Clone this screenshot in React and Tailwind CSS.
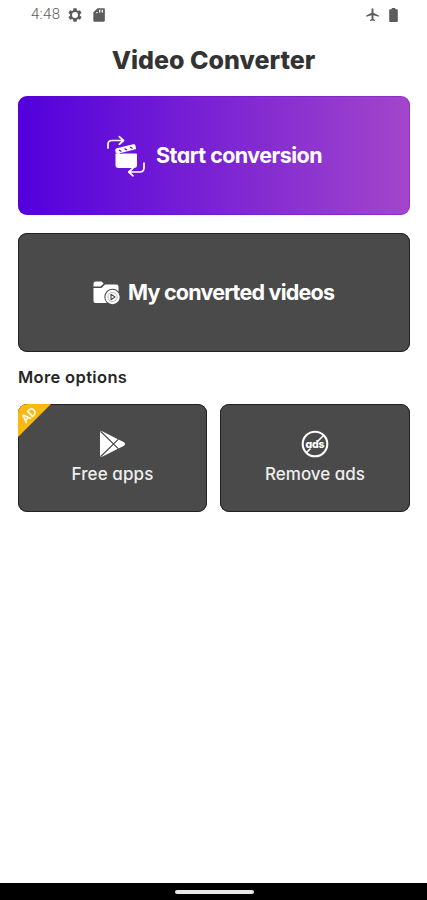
import React from "react";

const label = "font-['Inter',sans-serif] [font-feature-settings:'cv11'] whitespace-nowrap leading-none";
const darkCard = "rounded-[9px] bg-[#4a4a4a] shadow-[inset_0_0_0_1px_#222] text-white";

function StatusBar() {
  return (
    <div className="flex h-[29px] items-center pl-[31px] pr-[29px] text-[#5c5c5c]">
      <span className="w-[31px] font-['Roboto',sans-serif] text-[15px] font-light leading-none tracking-[0.3px]">4:48</span>
      <svg className="ml-[5px] size-[16px]" viewBox="0 0 24 24" fill="currentColor">
        <path fillRule="evenodd" d="M19.4 13a7.500 7.500 0 0 0 0-2l2.100-1.650a.5.5 0 0 0 .12-.64l-2-3.460a.5.5 0 0 0-.61-.22l-2.490 1a7.300 7.300 0 0 0-1.690-.98l-.38-2.650A.5.5 0 0 0 14 2h-4a.5.5 0 0 0-.49.420l-.38 2.650c-.61.250-1.170.590-1.690.980l-2.490-1a.5.5 0 0 0-.61.220l-2 3.460a.5.5 0 0 0 .12.640L4.600 11a8 8 0 0 0 0 2l-2.110 1.650a.5.5 0 0 0-.12.640l2 3.460c.12.220.390.300.610.220l2.490-1c.52.400 1.080.730 1.690.980l.38 2.650c.03.240.240.420.490.420h4c.25 0 .46-.18.490-.42l.38-2.650a7.300 7.300 0 0 0 1.690-.98l2.490 1c.23.090.490 0 .61-.22l2-3.460a.5.5 0 0 0-.12-.64zM12 16.500a4.500 4.500 0 1 1 0-9 4.500 4.500 0 0 1 0 9z" />
      </svg>
      <svg className="ml-[8px] size-[16px]" viewBox="0 0 24 24" fill="currentColor">
        <path fillRule="evenodd" d="M19 2h-9L3.500 8v12.500c0 1 .8 1.500 1.700 1.500H19c1 0 1.800-.7 1.800-1.700V3.800C20.800 2.800 20 2 19 2zM8 7.500h2v2H8zm4-3.200h2v4h-2zm4 0h2v4h-2z" />
      </svg>
      <div className="grow" />
      <svg className="size-[15px]" viewBox="0 0 24 24" fill="currentColor">
        <path d="M22 15.500v-2l-8.500-4.500V3.500a1.500 1.500 0 0 0-3 0V9L2 13.500v2l8.500-2.200V19L8 20.700V22.500l4-1 4 1v-1.800L13.500 19v-5.700z" />
      </svg>
      <svg className="ml-[9px] h-[14px] w-[9px]" viewBox="0 0 9 14" fill="currentColor">
        <path d="M2.700 0h3.600v1.200H8c.5 0 .8.300.8.800v11c0 .6-.3.900-.8.900H1c-.5 0-.8-.3-.8-.9V2c0-.5.300-.8.800-.8h1.700z" />
      </svg>
    </div>
  );
}

function ConvertIcon() {
  return (
    <svg className="h-[42px] w-[40px] shrink-0" viewBox="0 0 40 42" fill="none">
      <g stroke="white" strokeWidth="1.700" strokeLinecap="round" strokeLinejoin="round">
        <path d="M2 13V9.500Q2 5.500 6 5.500H17M13.300 1.700l4.200 3.800-4.200 3.800" />
        <path d="M38 28v4.500Q38 37 34 37H23.500M27 33.200l-4.200 3.800 4.200 3.800" />
      </g>
      <path d="M9.500 18.500H30a1 1 0 0 1 1 1V30a3 3 0 0 1-3 3H12.500a3 3 0 0 1-3-3z" fill="white" />
      <path d="m9.800 17.800-.5-2.300a2 2 0 0 1 1.500-2.300L27.200 9.300a2 2 0 0 1 2.300 1.400l.6 3.500L12 19z" fill="white" />
      <path d="m13 15 2.400 1.500M18.500 13.600l2.600 1.400M24 12.200l2.600 1.300" stroke="#6214d4" strokeWidth="1.300" />
      <path d="M14 18.500 30 14.600" stroke="#6a18d4" strokeWidth=".6" />
    </svg>
  );
}

function FolderIcon() {
  return (
    <svg className="h-[24px] w-[27px] shrink-0" viewBox="0 0 27 24" fill="none">
      <path d="M.5 5.500V2.500A2 2 0 0 1 2.500.5h6l2.200 2-3.200 3z" fill="white" />
      <path d="M.5 7h8L12 3.500H23.500A2 2 0 0 1 25.500 5.500V22H2.500a2 2 0 0 1-2-2z" fill="white" />
      <circle cx="19.500" cy="16" r="8.200" fill="#4a4a4a" />
      <path d="M21 21h6v3h-6z" fill="#4a4a4a" />
      <circle cx="19.500" cy="16" r="7.200" fill="white" />
      <circle cx="19.500" cy="16" r="4.600" stroke="#4a4a4a" strokeOpacity=".6" strokeWidth=".6" />
      <path d="m18 13.300 4 2.700-4 2.700z" fill="white" stroke="#4a4a4a" strokeWidth="1.100" strokeLinejoin="round" />
    </svg>
  );
}

function PlayStoreIcon() {
  return (
    <svg className="h-[28px] w-[27px]" viewBox="0 0 27 28" fill="none">
      <path d="M2.600 1Q1 .4 1 2v24q0 1.600 1.600 1L19.500 18.600l5.500-2.900q2-1.700 0-3.400l-5.500-2.900z" fill="white" />
      <path d="M1.500 1.200 19.500 18.900M1.500 26.800 19.500 9.100" stroke="#4a4a4a" strokeWidth="1.200" />
    </svg>
  );
}

function NoAdsIcon() {
  return (
    <svg className="size-[28px]" viewBox="0 0 28 28" fill="none">
      <circle cx="14" cy="14" r="12.300" stroke="white" strokeWidth="2.100" />
      <path d="M5.500 22.500l4-4M16.500 11.500l6-6" stroke="white" strokeWidth="1.700" />
      <text x="14" y="17.700" textAnchor="middle" fill="white" textLength="19" className="font-['Inter',sans-serif] text-[10.500px] font-extrabold [font-feature-settings:'cv11']">ads</text>
    </svg>
  );
}

export default function App() {
  return (
    <div className="flex h-[900px] w-[427px] flex-col overflow-hidden bg-white">
      <StatusBar />
      <h1 className={`${label} mt-[19px] h-[25px] text-center text-[25px] font-extrabold text-[#333]`}>Video Converter</h1>
      <main className="flex grow flex-col pl-[18px] pr-[17px] pt-[23px]">
        <button className="flex h-[119px] items-center rounded-[9px] bg-linear-to-r/srgb from-[#5200dc] to-[#a346cb] pl-[88px] text-white shadow-[inset_0_0_0_1px_rgba(110,0,200,0.3)]">
          <ConvertIcon />
          <span className={`${label} ml-[10px] text-[21.500px] font-bold tracking-[-0.55px]`}>Start conversion</span>
        </button>
        <button className={`${darkCard} mt-[18px] flex h-[119px] items-center pl-[75px]`}>
          <FolderIcon />
          <span className={`${label} ml-[8px] text-[21.500px] font-bold tracking-[-0.78px]`}>My converted videos</span>
        </button>
        <h2 className={`${label} mt-[17px] h-[17px] text-[16.500px] font-semibold tracking-[0.35px] text-[#262626]`}>More options</h2>
        <div className="mt-[18px] grid grid-cols-[189px_190px] gap-[13px]">
          <button className={`${darkCard} relative flex h-[108px] flex-col items-center overflow-hidden pt-[26px]`}>
            <svg className="absolute left-0 top-0 size-[33px]" viewBox="0 0 33 33">
              <path d="M0 0H33L0 33z" fill="#fbb811" />
              <text x="11.500" y="15" textAnchor="middle" fill="white" transform="rotate(-45 11.500 11.500)" className="font-['Inter',sans-serif] text-[11.500px] font-semibold">AD</text>
            </svg>
            <PlayStoreIcon />
            <span className={`${label} mt-[8px] text-[17px] font-medium tracking-[0.1px] text-[#eee]`}>Free apps</span>
          </button>
          <button className={`${darkCard} flex h-[108px] flex-col items-center pt-[26px]`}>
            <NoAdsIcon />
            <span className={`${label} mt-[8px] text-[17px] font-medium text-[#eee]`}>Remove ads</span>
          </button>
        </div>
      </main>
      <footer className="flex h-[17px] items-center justify-center bg-black">
        <div className="ml-[2px] h-[4px] w-[79px] rounded-full bg-[#e8e8e8]" />
      </footer>
    </div>
  );
}
